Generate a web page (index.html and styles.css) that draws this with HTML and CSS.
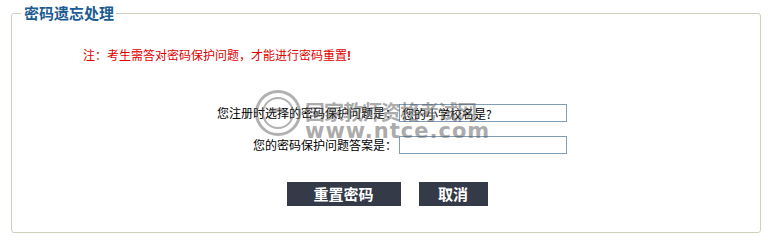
FILE: index.html
```html
<!DOCTYPE html>
<html lang="zh">
<head>
<meta charset="utf-8">
<title>密码遗忘处理</title>
<link rel="stylesheet" href="styles.css">
</head>
<body>
<fieldset class="panel">
  <legend class="panel-title">密码遗忘处理</legend>
  <p class="note">注：考生需答对密码保护问题，才能进行密码重置<span class="bang">!</span></p>
  <div class="form">
    <div class="row">
      <label class="label">您注册时选择的密码保护问题是：</label>
      <input class="field" type="text" value="您的小学校名是?">
    </div>
    <div class="row">
      <label class="label">您的密码保护问题答案是：</label>
      <input class="field" type="text" value="">
    </div>
  </div>
  <div class="actions">
    <button class="btn btn-wide" type="button">重置密码</button>
    <button class="btn btn-narrow" type="button">取消</button>
  </div>
  <div class="watermark" aria-hidden="true">
    <div class="wm-logo"><div class="wm-ring"><div class="wm-wave"></div></div></div>
    <div class="wm-text">
      <div class="wm-cn">国家教师资格考试网</div>
      <div class="wm-en">www.ntce.com</div>
    </div>
  </div>
</fieldset>
</body>
</html>
```
FILE: styles.css
```css
html, body {
  margin: 0;
  padding: 0;
  background: #ffffff;
}
body {
  font-family: "Noto Sans CJK SC", "DejaVu Sans", sans-serif;
  font-size: 12px;
  color: #000;
}
.panel {
  position: relative;
  margin: 4px 8px 0 11px;
  padding: 0 0 26px 0;
  border: 1px solid #cfcfbd;
  border-radius: 3px;
  box-sizing: border-box;
  width: 750px;
}
.panel-title {
  margin-left: 9px;
  padding: 0 2px 0 3px;
  font-size: 15px;
  line-height: 18px;
  font-weight: bold;
  color: #1c5c92;
  letter-spacing: 0;
}
.note {
  margin: 25px 0 0 71px;
  line-height: 16px;
  font-size: 12px;
  color: #e00000;
}
.bang {
  font-weight: bold;
  font-family: "Liberation Sans", sans-serif;
}
.form {
  margin-top: 40px;
  display: grid;
  row-gap: 14px;
}
.row {
  display: grid;
  grid-template-columns: 385px 168px;
  column-gap: 2px;
  align-items: center;
}
.label {
  text-align: right;
  line-height: 18px;
  font-size: 12px;
}
.field {
  box-sizing: border-box;
  width: 168px;
  height: 18px;
  margin: 0;
  padding: 0 2px;
  border: 1px solid #7f9db9;
  font-family: "Noto Sans CJK SC", "DejaVu Sans", sans-serif;
  font-size: 12px;
  line-height: 16px;
  color: #000;
  background: #fff;
  outline: none;
}
.actions {
  margin-top: 28px;
  display: flex;
  justify-content: center;
  gap: 18px;
  padding-left: 2px;
}
.btn {
  height: 24px;
  margin: 0;
  padding: 0;
  border: none;
  background: #343a48;
  color: #fff;
  font-family: "Noto Sans CJK SC", "DejaVu Sans", sans-serif;
  font-size: 15px;
  font-weight: bold;
  line-height: 24px;
}
.btn-wide { width: 114px; }
.btn-narrow { width: 69px; }
.watermark {
  position: absolute;
  left: 243px;
  top: 68px;
  width: 245px;
  height: 48px;
  display: flex;
  align-items: flex-start;
  gap: 4px;
  opacity: 0.5;
  pointer-events: none;
}
.wm-logo {
  flex: 0 0 auto;
  box-sizing: border-box;
  width: 46px;
  height: 46px;
  border: 3px solid #666;
  border-radius: 50%;
  display: flex;
  align-items: center;
  justify-content: center;
}
.wm-ring {
  box-sizing: border-box;
  width: 32px;
  height: 32px;
  border: 2px solid #666;
  border-radius: 50%;
  display: flex;
  align-items: flex-end;
  justify-content: center;
  overflow: hidden;
}
.wm-wave {
  width: 22px;
  height: 10px;
  margin-bottom: 5px;
  border-top: 4px solid #666;
  border-radius: 50% 50% 0 0;
}
.wm-text {
  flex: 0 0 auto;
  margin-top: 12px;
  color: #5a5a5a;
  font-weight: bold;
}
.wm-cn {
  font-size: 20px;
  line-height: 20px;
  letter-spacing: -1px;
  white-space: nowrap;
}
.wm-en {
  font-family: "DejaVu Sans", sans-serif;
  font-size: 21px;
  line-height: 18px;
  letter-spacing: 1px;
  white-space: nowrap;
}
```
